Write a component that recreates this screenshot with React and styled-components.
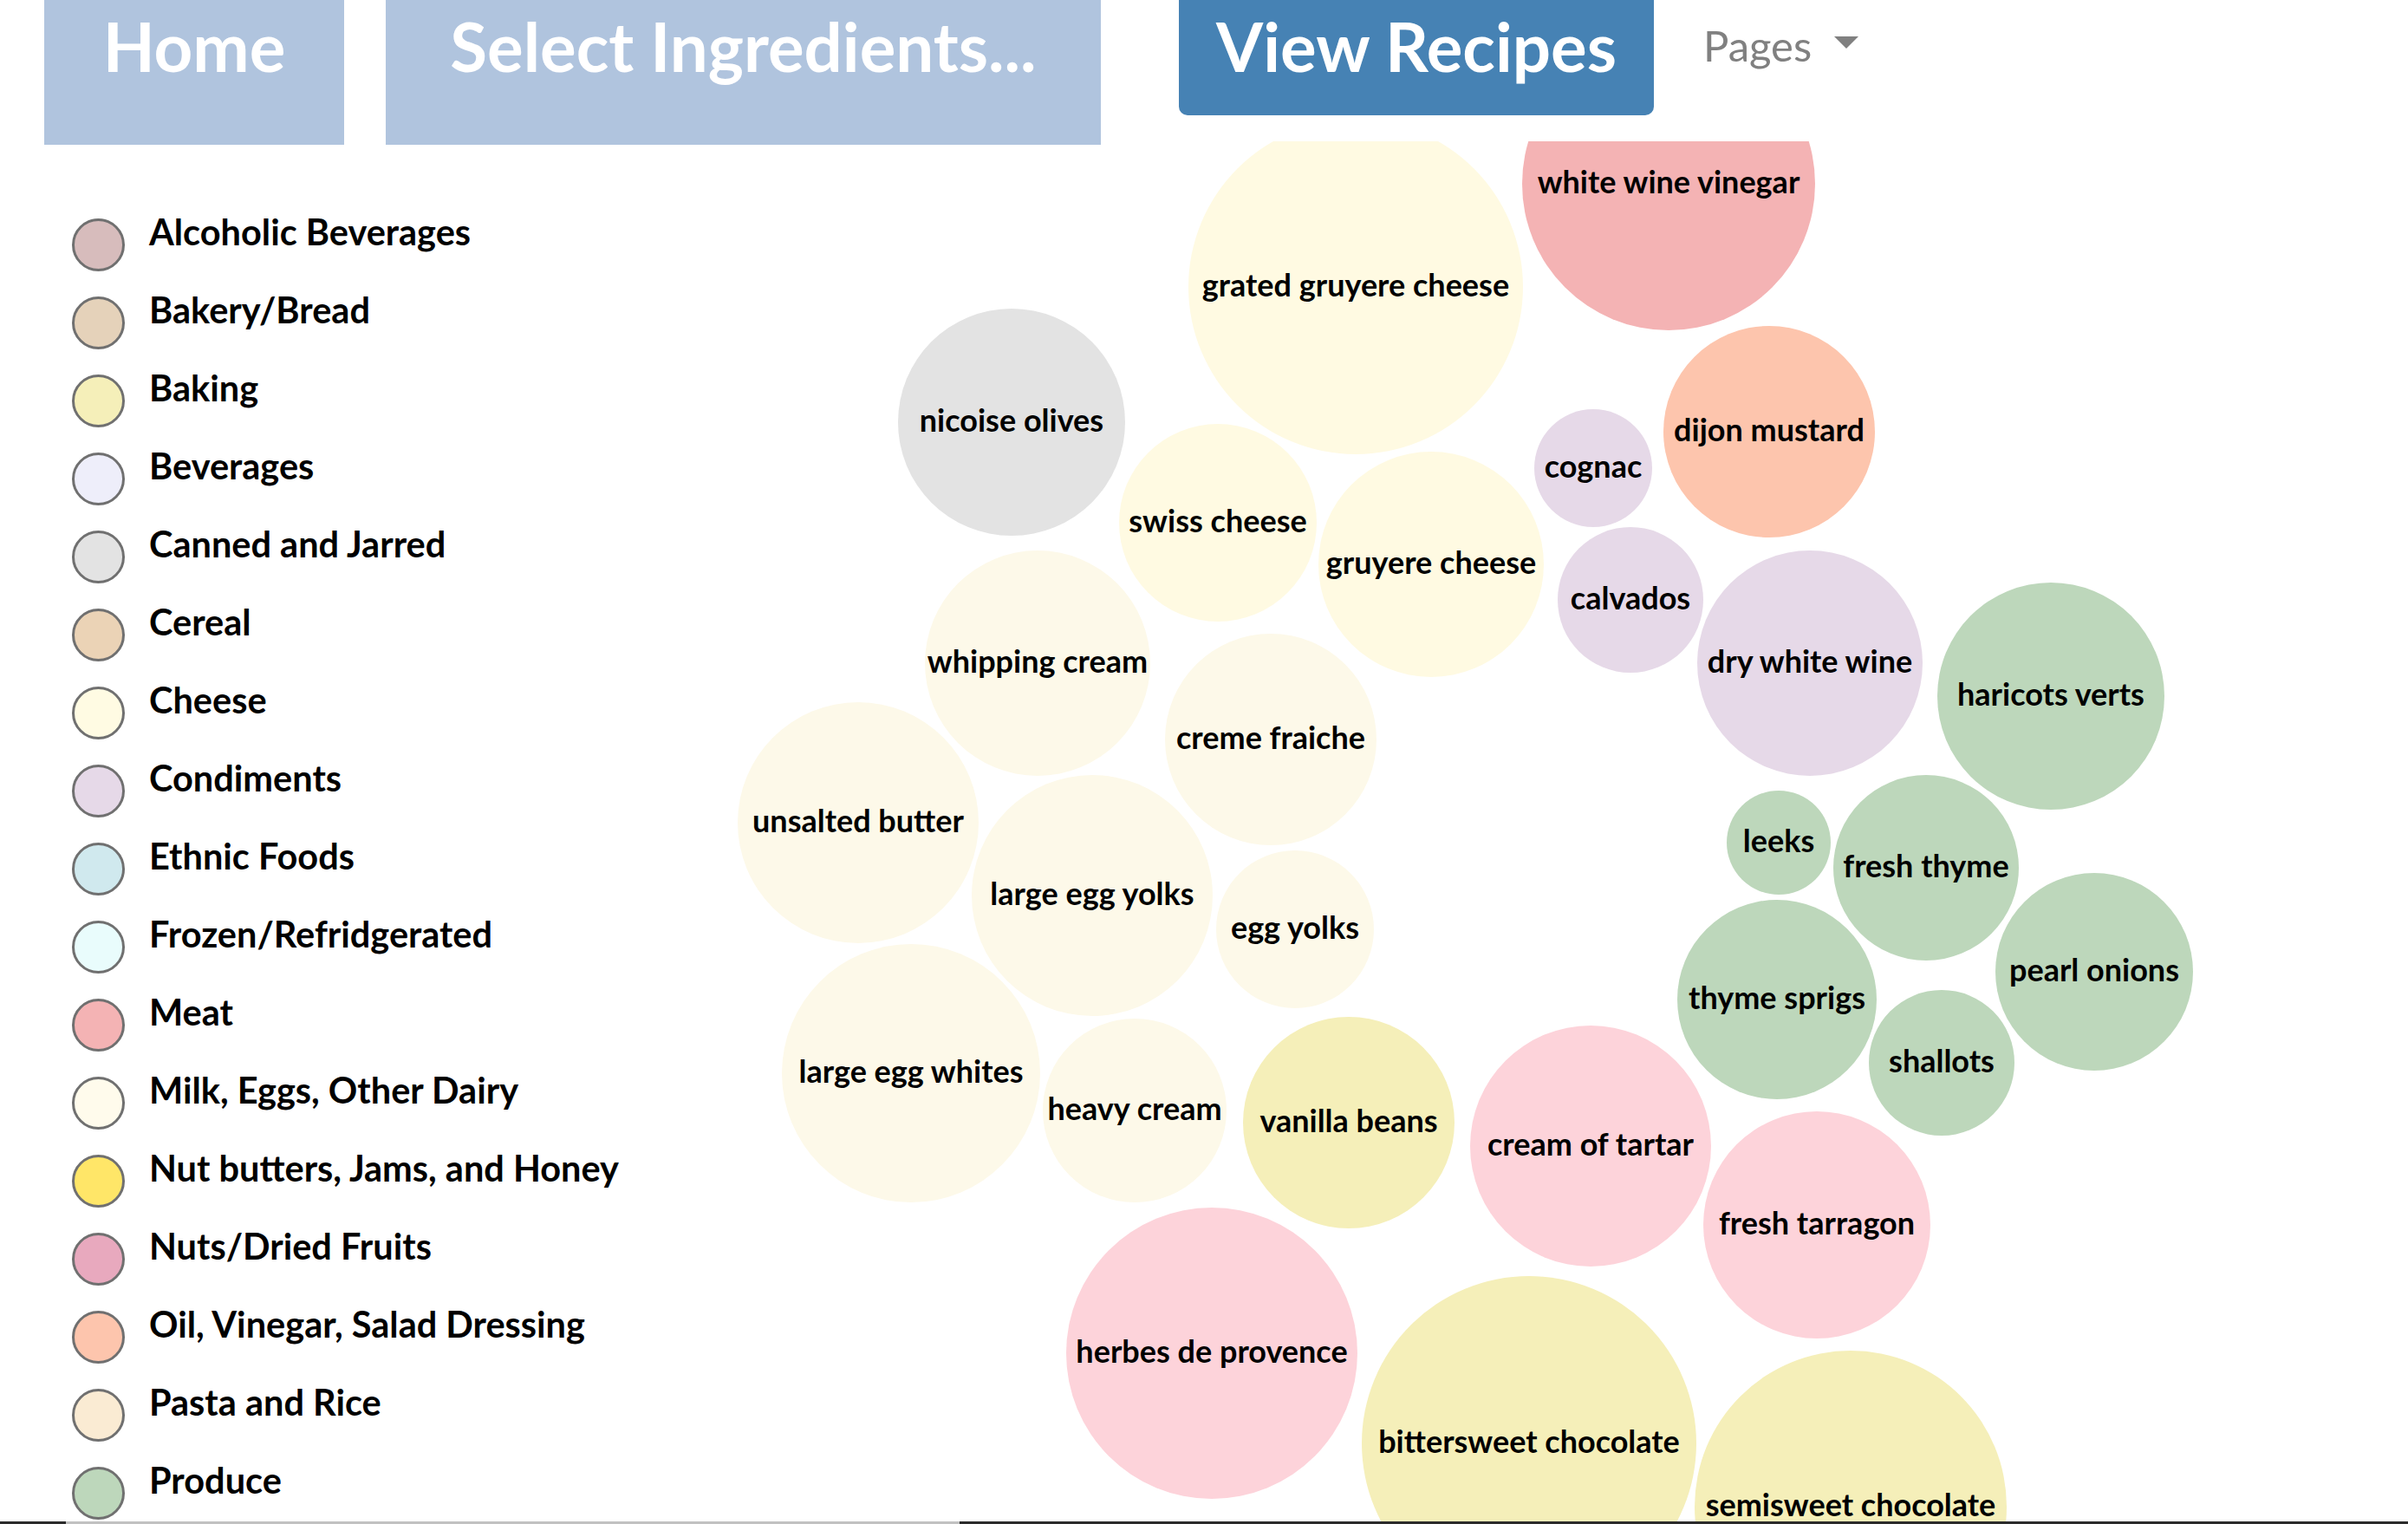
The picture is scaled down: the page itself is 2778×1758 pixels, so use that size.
import React from "react";
import styled, { createGlobalStyle } from "styled-components";

const GlobalStyle = createGlobalStyle`
  html, body {
    margin: 0;
    padding: 0;
    height: 100%;
    overflow: hidden;
    background: #fff;
  }
  body {
    font-family: Lato, "Open Sans", sans-serif;
  }
`;

const Page = styled.div`
  width: 100vw;
  height: 100vh;
  display: flex;
  flex-direction: column;
  overflow: hidden;
`;

const NavBar = styled.nav`
  flex: none;
  height: 163px;
  display: flex;
  align-items: flex-start;
  padding-left: 51px;
  position: relative;
  z-index: 1;
`;

const NavTab = styled.a`
  display: block;
  flex: none;
  box-sizing: border-box;
  width: ${(p) => p.$w}px;
  height: ${(p) => (p.$active ? 133 : 167)}px;
  margin-right: ${(p) => p.$gap}px;
  padding-top: 14px;
  text-align: center;
  background: ${(p) => (p.$active ? "#4682b4" : "#b0c4de")};
  border-radius: ${(p) => (p.$active ? "0 0 10px 10px" : "0")};
  color: #fff;
  font-weight: 700;
  font-size: 78px;
  line-height: 1;
  white-space: nowrap;
  text-decoration: none;
`;

const Dropdown = styled.div`
  display: flex;
  align-items: center;
  padding-top: 28px;
  color: #808080;
  font-size: 49px;
  line-height: 1;
`;

const Caret = styled.span`
  display: inline-block;
  width: 0;
  height: 0;
  margin-left: 26px;
  margin-top: -8px;
  border-top: 14px solid #808080;
  border-left: 14.5px solid transparent;
  border-right: 14.5px solid transparent;
`;

const Main = styled.main`
  flex: 1;
  min-height: 0;
  display: flex;
`;

const Legend = styled.ul`
  flex: none;
  width: 800px;
  box-sizing: border-box;
  margin: 0;
  padding: 84px 0 0 83px;
  list-style: none;
`;

const LegendRow = styled.li`
  height: 90px;
  display: flex;
  align-items: flex-start;
`;

const Swatch = styled.span`
  flex: none;
  width: 61px;
  height: 61px;
  margin-top: 5px;
  box-sizing: border-box;
  border: 3px solid #707070;
  border-radius: 50%;
  background: ${(p) => p.$color};
`;

const LegendLabel = styled.span`
  margin-left: 28px;
  font-size: 41.5px;
  font-weight: 700;
  line-height: 1;
  color: #000;
  white-space: nowrap;
`;

const ChartArea = styled.section`
  flex: 1;
  min-width: 0;
  overflow: hidden;
`;

const BubbleSvg = styled.svg`
  display: block;
  width: 100%;
  height: 100%;
  overflow: hidden;
`;

const BubbleLabel = styled.text`
  font-family: Lato, "Open Sans", sans-serif;
  font-size: 36px;
  font-weight: 700;
  fill: #000;
`;

const ScrollTrack = styled.div`
  flex: none;
  height: 3px;
  background: #2b2b2b;
  display: flex;
`;

const ScrollThumb = styled.div`
  margin-left: 76px;
  width: 1031px;
  background: #c1c1c1;
`;

const colors = {
  alcohol: "#d7bcbc",
  bakery: "#e5d2ba",
  baking: "#f5efb9",
  beverages: "#eeeefa",
  canned: "#e3e3e3",
  cereal: "#ebd3b6",
  cheese: "#fffae2",
  condiments: "#e6d9e8",
  ethnic: "#d0e9ee",
  frozen: "#e9fcfc",
  meat: "#f4b3b4",
  milk: "#fdf9e9",
  nutButters: "#ffe668",
  nuts: "#e8a9be",
  oil: "#fdc5ad",
  pasta: "#faebd3",
  produce: "#bdd7bb",
  spices: "#fdd3da",
};

const legend = [
  ["Alcoholic Beverages", colors.alcohol],
  ["Bakery/Bread", colors.bakery],
  ["Baking", colors.baking],
  ["Beverages", colors.beverages],
  ["Canned and Jarred", colors.canned],
  ["Cereal", colors.cereal],
  ["Cheese", "#fffbe3"],
  ["Condiments", colors.condiments],
  ["Ethnic Foods", colors.ethnic],
  ["Frozen/Refridgerated", colors.frozen],
  ["Meat", colors.meat],
  ["Milk, Eggs, Other Dairy", "#fffbec"],
  ["Nut butters, Jams, and Honey", colors.nutButters],
  ["Nuts/Dried Fruits", colors.nuts],
  ["Oil, Vinegar, Salad Dressing", colors.oil],
  ["Pasta and Rice", colors.pasta],
  ["Produce", colors.produce],
];

// x, y, r in chart coordinates
const bubbles = [
  ["grated gruyere cheese", 764, 168, 193, "cheese"],
  ["white wine vinegar", 1125, 49, 169, "meat"],
  ["nicoise olives", 367, 324, 131, "canned"],
  ["swiss cheese", 605, 440, 114, "cheese"],
  ["gruyere cheese", 851, 488, 130, "cheese"],
  ["cognac", 1038, 377, 68, "condiments"],
  ["dijon mustard", 1241, 335, 122, "oil"],
  ["calvados", 1081, 529, 84, "condiments"],
  ["dry white wine", 1288, 602, 130, "condiments"],
  ["haricots verts", 1566, 640, 131, "produce"],
  ["whipping cream", 397, 602, 130, "milk"],
  ["creme fraiche", 666, 690, 122, "milk"],
  ["unsalted butter", 190, 786, 139, "milk"],
  ["large egg yolks", 460, 870, 139, "milk"],
  ["egg yolks", 694, 909, 91, "milk"],
  ["leeks", 1252, 809, 60, "produce"],
  ["fresh thyme", 1422, 838, 107, "produce"],
  ["pearl onions", 1616, 958, 114, "produce"],
  ["thyme sprigs", 1250, 990, 115, "produce"],
  ["shallots", 1440, 1063, 84, "produce"],
  ["large egg whites", 251, 1075, 149, "milk"],
  ["heavy cream", 509, 1118, 106, "milk"],
  ["vanilla beans", 756, 1132, 122, "baking"],
  ["cream of tartar", 1035, 1159, 139, "spices"],
  ["fresh tarragon", 1296, 1250, 131, "spices"],
  ["herbes de provence", 598, 1398, 168, "spices"],
  ["bittersweet chocolate", 964, 1502, 193, "baking"],
  ["semisweet chocolate", 1335, 1575, 180, "baking"],
];

const BubbleChart = () => (
  <ChartArea>
    <BubbleSvg>
      {bubbles.map(([name, x, y, r, cat]) => (
        <circle key={name} cx={x} cy={y} r={r} fill={colors[cat]} />
      ))}
      {bubbles.map(([name, x, y]) => (
        <BubbleLabel key={name} x={x} y={y} dy="0.3em" textAnchor="middle">
          {name}
        </BubbleLabel>
      ))}
    </BubbleSvg>
  </ChartArea>
);

const App = () => {
  return (
    <Page>
      <GlobalStyle />
      <NavBar>
        <NavTab $w={346} $gap={48}>Home</NavTab>
        <NavTab $w={825} $gap={90}>Select Ingredients...</NavTab>
        <NavTab $w={548} $gap={57} $active>View Recipes</NavTab>
        <Dropdown>
          Pages
          <Caret />
        </Dropdown>
      </NavBar>
      <Main>
        <Legend>
          {legend.map(([label, color]) => (
            <LegendRow key={label}>
              <Swatch $color={color} />
              <LegendLabel>{label}</LegendLabel>
            </LegendRow>
          ))}
        </Legend>
        <BubbleChart />
      </Main>
      <ScrollTrack>
        <ScrollThumb />
      </ScrollTrack>
    </Page>
  );
};

export default App;
